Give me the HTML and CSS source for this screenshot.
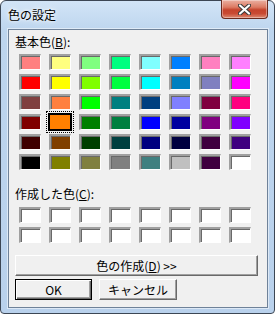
FILE: index.html
```html
<!DOCTYPE html>
<html lang="ja">
<head>
  <meta charset="UTF-8">
  <title>色の設定</title>
  <link rel="stylesheet" href="styles.css">
</head>
<body>
  <div class="window">
    <div class="titlebar">
      <span class="title">色の設定</span>
      <div class="close">
        <svg width="13" height="11" viewBox="0 0 13 11">
          <path d="M2 1.5 L11 9.5 M11 1.5 L2 9.5" stroke="#3b3b3b" stroke-width="4.2" stroke-linecap="round"/>
          <path d="M2 1.5 L11 9.5 M11 1.5 L2 9.5" stroke="#fff" stroke-width="2.2" stroke-linecap="round"/>
        </svg>
      </div>
    </div>

    <div class="client">
      <div class="label">基本色(<u>B</u>):</div>
      <div class="swatches" id="basic"></div>

      <div class="label label-custom">作成した色(<u>C</u>):</div>
      <div class="swatches swatches-custom" id="custom"></div>

      <button class="btn btn-wide">色の作成(<u>D</u>) &gt;&gt;</button>
      <div class="btn-row">
        <button class="btn btn-default">OK</button>
        <button class="btn btn-cancel">キャンセル</button>
      </div>
    </div>
  </div>

  <script>
    const warna = [
      '#ff8080', '#ffff80', '#80ff80', '#00ff80', '#80ffff', '#0080ff', '#ff80c0', '#ff80ff',
      '#ff0000', '#ffff00', '#80ff00', '#00ff40', '#00ffff', '#0080c0', '#8080c0', '#ff00ff',
      '#804040', '#ff8040', '#00ff00', '#008080', '#004080', '#8080ff', '#800040', '#ff0080',
      '#800000', '#ff8000', '#008000', '#008040', '#0000ff', '#0000a0', '#800080', '#8000ff',
      '#400000', '#804000', '#004000', '#004040', '#000080', '#000040', '#400040', '#400080',
      '#000000', '#808000', '#808040', '#808080', '#408080', '#c0c0c0', '#400040', '#ffffff'
    ];

    // basic colors
    const basic = document.getElementById('basic');
    warna.forEach((w, i) => {
      const kotak = document.createElement('div');
      kotak.className = i === 25 ? 'swatch selected' : 'swatch';
      kotak.style.background = w;
      basic.appendChild(kotak);
    });

    // custom colors (empty)
    const custom = document.getElementById('custom');
    for (let i = 0; i < 16; i++) {
      const kotak = document.createElement('div');
      kotak.className = 'swatch';
      custom.appendChild(kotak);
    }
  </script>
</body>
</html>
```

FILE: styles.css
```css
body {
  margin: 0;
  font-family: "Noto Sans CJK JP", "Noto Sans", sans-serif;
  font-size: 12px;
  color: #000;
}

.window {
  width: 275px;
  height: 314px;
  box-sizing: border-box;
  border: 1px solid #3c4654;
  border-radius: 6px 6px 4px 4px;
  background: linear-gradient(#d2e4f7, #bdd5ee 30px, #b9d1ec);
  display: flex;
  flex-direction: column;
  padding: 0 6px 5px 7px;
}

.titlebar {
  height: 28px;
  display: flex;
  justify-content: space-between;
  align-items: flex-start;
}

.title {
  margin-top: 6px;
  line-height: 16px;
  text-shadow: 0 0 6px #fff, 0 0 3px #fff;
}

.close {
  width: 47px;
  height: 19px;
  box-sizing: border-box;
  margin-top: -1px;
  border: 1px solid #6b2a1e;
  border-top: none;
  border-radius: 0 0 4px 4px;
  background: linear-gradient(#ebb0a2, #dc7a63 40%, #c5432c 55%, #c94a33 75%, #dc8a72);
  box-shadow: inset 0 0 0 1px rgba(255, 255, 255, 0.35);
  display: flex;
  align-items: center;
  justify-content: center;
}

.client {
  flex: 1;
  background: #f0f0f0;
  border: 1px solid #6f8299;
  box-shadow: 0 0 0 1px rgba(255, 255, 255, 0.5);
  display: flex;
  flex-direction: column;
  align-items: flex-start;
}

.label {
  margin: 5px 0 0 6px;
  line-height: 14px;
}

.label-custom {
  margin-top: 17px;
}

.swatches {
  display: grid;
  grid-template-columns: repeat(8, 22px);
  grid-auto-rows: 16px;
  column-gap: 8px;
  row-gap: 4px;
  margin: 5px 0 0 10px;
}

.swatches-custom {
  margin-top: 6px;
}

.swatch {
  box-sizing: border-box;
  background: #fff;
  border-style: solid;
  border-width: 2px 1px 1px 2px;
  border-color: #a0a0a0 #fff #fff #a0a0a0;
  box-shadow: inset 1px 1px #696969;
}

.swatch.selected {
  border: 1px solid #000;
  box-shadow: 0 0 0 1px #000;
  outline: 1px dotted #000;
  outline-offset: 2px;
}

.btn {
  height: 21px;
  box-sizing: border-box;
  padding: 0;
  font-family: inherit;
  font-size: 12px;
  color: #000;
  background: #f0f0f0;
  border: 1px solid;
  border-color: #fff #696969 #696969 #fff;
  box-shadow: inset -1px -1px #a0a0a0;
}

.btn-wide {
  width: 243px;
  margin: 12px 0 0 6px;
}

.btn-row {
  display: flex;
  gap: 7px;
  margin: 3px 0 0 6px;
}

.btn-default {
  width: 77px;
  border-color: #000;
  box-shadow: inset 1px 1px #fff, inset -1px -1px #696969, inset -2px -2px #a0a0a0;
}

.btn-cancel {
  width: 78px;
}
```
